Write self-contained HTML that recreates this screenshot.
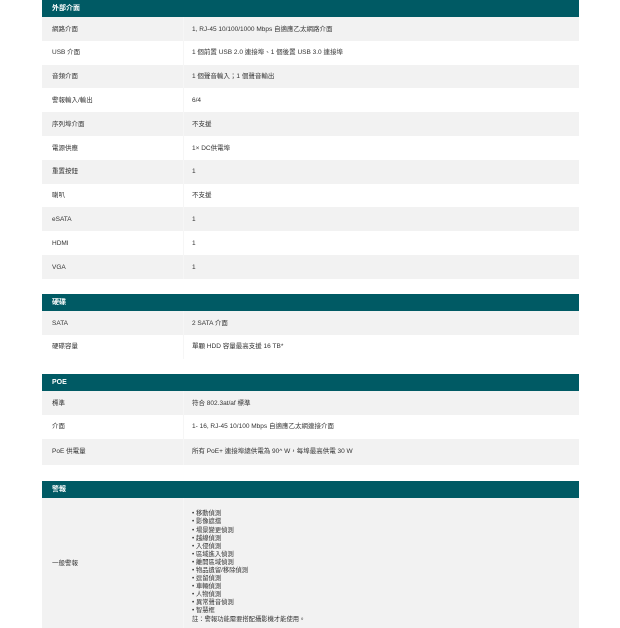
<!DOCTYPE html>
<html><head><meta charset="utf-8"><style>
*{margin:0;padding:0;box-sizing:border-box}
body{width:620px;height:620px;background:#fff;font-family:"Liberation Sans","Noto Sans CJK TC",sans-serif;font-size:6.5px;color:#333;position:relative;overflow:hidden}
.t{position:absolute;left:42px;width:537px}
.h{background:#005a64;color:#fff;font-weight:bold;height:17px;line-height:17px;padding-left:10px;font-size:7px}
.r{display:flex;height:23.8px;align-items:center}
.r:nth-child(even){background:#f2f2f2}
.r:nth-child(odd){background:#fff}
.l{width:142px;padding-left:10px;padding-top:1.5px;height:100%;display:flex;align-items:center;border-right:1px solid #f6f6f6;line-height:10px}
.v{padding-left:8px;padding-top:1.5px;line-height:10px}
.tall{height:130px;background:#f2f2f2}
.v.list{line-height:8.1px;font-size:6.3px;padding-top:8px}
</style></head><body>
<div class="t" style="top:0">
<div class="h">外部介面</div>
<div class="r"><div class="l">網路介面</div><div class="v">1, RJ-45 10/100/1000 Mbps 自適應乙太網路介面</div></div>
<div class="r"><div class="l">USB 介面</div><div class="v">1 個前置 USB 2.0 連接埠、1 個後置 USB 3.0 連接埠</div></div>
<div class="r"><div class="l">音頻介面</div><div class="v">1 個聲音輸入；1 個聲音輸出</div></div>
<div class="r"><div class="l">警報輸入/輸出</div><div class="v">6/4</div></div>
<div class="r"><div class="l">序列埠介面</div><div class="v">不支援</div></div>
<div class="r"><div class="l">電源供應</div><div class="v">1× DC供電埠</div></div>
<div class="r"><div class="l">重置按鈕</div><div class="v">1</div></div>
<div class="r"><div class="l">喇叭</div><div class="v">不支援</div></div>
<div class="r"><div class="l">eSATA</div><div class="v">1</div></div>
<div class="r"><div class="l">HDMI</div><div class="v">1</div></div>
<div class="r"><div class="l">VGA</div><div class="v">1</div></div>
</div>
<div class="t" style="top:294px">
<div class="h">硬碟</div>
<div class="r"><div class="l">SATA</div><div class="v">2 SATA 介面</div></div>
<div class="r"><div class="l">硬碟容量</div><div class="v">單顆 HDD 容量最高支援 16 TB*</div></div>
</div>
<div class="t" style="top:374px">
<div class="h">POE</div>
<div class="r"><div class="l">標準</div><div class="v">符合 802.3at/af 標準</div></div>
<div class="r"><div class="l">介面</div><div class="v">1- 16, RJ-45 10/100 Mbps 自適應乙太網連接介面</div></div>
<div class="r" style="height:26px"><div class="l">PoE 供電量</div><div class="v">所有 PoE+ 連接埠總供電為 90^ W，每埠最高供電 30 W</div></div>
</div>
<div class="t" style="top:481px">
<div class="h">警報</div>
<div class="r tall"><div class="l">一般警報</div><div class="v list">• 移動偵測<br>• 影像遮擋<br>• 場景變更偵測<br>• 越線偵測<br>• 入侵偵測<br>• 區域進入偵測<br>• 離開區域偵測<br>• 物品遺留/移除偵測<br>• 逗留偵測<br>• 車輛偵測<br>• 人物偵測<br>• 異常聲音偵測<br>• 智慧框<br>註：警報功能需要搭配攝影機才能使用。</div></div>
</div>
</body></html>
